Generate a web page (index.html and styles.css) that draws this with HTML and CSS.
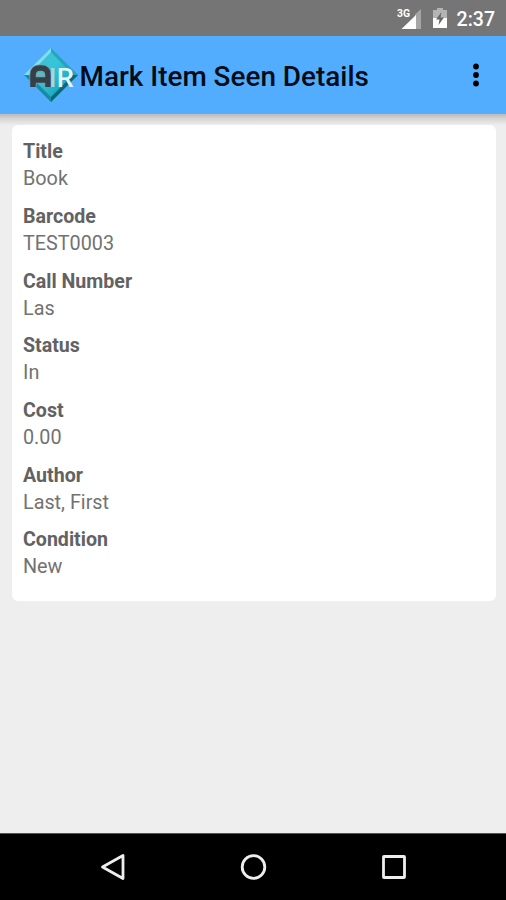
FILE: index.html
```html
<!DOCTYPE html>
<html lang="en">
<head>
<meta charset="utf-8">
<title>Mark Item Seen Details</title>
<link rel="stylesheet" href="styles.css">
</head>
<body>
<div class="screen">
  <div class="status">
    <svg class="signal" width="26" height="24" viewBox="0 0 26 24">
      <path d="M18 7.500 24 2v20h-6z" fill="#a6a6a6"/>
      <path d="M4.500 22 19 8v14z" fill="#fff"/>
      <text class="net" x="0" y="10" textLength="13" lengthAdjust="spacingAndGlyphs">3G</text>
    </svg>
    <svg class="battery" width="16" height="22" viewBox="0 0 16 22">
      <path d="M1 3h4V1h6v2h4v8H1z" fill="#b4b4b4"/>
      <path d="M1 11h14v10H1z" fill="#fff"/>
      <path d="M9.500 5 4 12.500h3.500L6.500 18 12 10.500H8.500z" fill="#666"/>
    </svg>
    <span class="time">2:37</span>
  </div>
  <header class="bar">
    <svg class="logo" width="56" height="58" viewBox="0 0 56 58">
      <defs>
        <linearGradient id="face" x1="0" y1="0" x2="1" y2="1">
          <stop offset="0" stop-color="#49b9d2"/>
          <stop offset=".45" stop-color="#35c5d8"/>
          <stop offset="1" stop-color="#078e9e"/>
        </linearGradient>
      </defs>
      <path d="M28 2 55 29 28 56 1 29z" fill="url(#face)"/>
      <path d="M1 29 28 2l0 4L6 29z" fill="#83dcf0"/>
      <path d="M28 2 55 29h-5L28 6z" fill="#24a4bf"/>
      <path d="M1 29 28 56v-5L6 29z" fill="#168ba5"/>
      <path d="M55 29 28 56v-5l22-22z" fill="#08697c"/>
      <path d="M10 41V29q0-7 7-7h1q7 0 7 7v12M11 34h13" fill="none" stroke="#7f9ba4" stroke-width="7"/>
      <path d="M10 41V29q0-7 7-7h1q7 0 7 7v12M11 34h13" fill="none" stroke="#344047" stroke-width="5.500"/>
      <path d="M15 28.500h5" stroke="#8ea6ad" stroke-width="2"/>
      <text class="mark mark-i" x="26" y="41">I</text>
      <text class="mark" x="33.800" y="41" textLength="17" lengthAdjust="spacingAndGlyphs">R</text>
    </svg>
    <h1 class="title">Mark Item Seen Details</h1>
    <svg class="more" width="8" height="24" viewBox="0 0 8 24">
      <circle cx="4" cy="3.500" r="2.900"/><circle cx="4" cy="12" r="2.900"/><circle cx="4" cy="20.500" r="2.900"/>
    </svg>
  </header>
  <main class="content">
    <dl class="card">
      <div class="field"><dt>Title</dt><dd>Book</dd></div>
      <div class="field"><dt>Barcode</dt><dd>TEST0003</dd></div>
      <div class="field"><dt>Call Number</dt><dd>Las</dd></div>
      <div class="field"><dt>Status</dt><dd>In</dd></div>
      <div class="field"><dt>Cost</dt><dd>0.00</dd></div>
      <div class="field"><dt>Author</dt><dd>Last, First</dd></div>
      <div class="field"><dt>Condition</dt><dd>New</dd></div>
    </dl>
  </main>
  <nav class="nav">
    <svg width="28" height="28" viewBox="0 0 28 28"><path d="M24 2.500v23L3.500 14z"/></svg>
    <svg width="28" height="28" viewBox="0 0 28 28"><circle cx="13.500" cy="14" r="11.300"/></svg>
    <svg width="28" height="28" viewBox="0 0 28 28"><rect x="3.500" y="3.500" width="21" height="21" rx=".5"/></svg>
  </nav>
</div>
</body>
</html>
```
FILE: styles.css
```css
body {
  margin: 0;
  font-family: Roboto, sans-serif;
}

.screen {
  display: flex;
  flex-direction: column;
  width: 506px;
  height: 900px;
  overflow: hidden;
  background: #eee;
}

.status {
  display: flex;
  align-items: center;
  justify-content: flex-end;
  box-sizing: border-box;
  height: 36px;
  padding-right: 11px;
  background: #757575;
}

.signal {
  margin: 1px 9px 0 0;
}

.net {
  font: bold 11px Roboto, sans-serif;
  fill: #fff;
}

.battery {
  margin-right: 9px;
}

.time {
  padding-top: 2px;
  color: #fff;
  font-size: 19.5px;
  font-weight: 500;
}

.bar {
  display: flex;
  align-items: center;
  position: relative;
  box-sizing: border-box;
  height: 78px;
  padding: 0 26px 0 23px;
  background: #53adff;
}

/* Soft edge cast on the page below the bar. */
.bar::after {
  content: "";
  position: absolute;
  top: 100%;
  left: 0;
  right: 0;
  height: 11px;
  background: linear-gradient(#bcb9b7, #d5d3d2 40%, #eee);
}

.mark {
  font: 500 26px Roboto, sans-serif;
  fill: #e7f5f7;
}

.mark-i {
  fill: #9edbe1;
}

.title {
  flex: 1;
  margin: 3px 0 0 0.5px;
  color: #000c18;
  font-size: 27.9px;
  font-weight: 500;
  white-space: nowrap;
}

.content {
  flex: 1;
  padding: 11px 10.5px 0 11.5px;
}

.card {
  box-sizing: border-box;
  height: 476px;
  margin: 0;
  padding: 13.3px 12px 0 11.5px;
  border-radius: 6px;
  background: #fff;
  color: #727272;
  font-size: 19.8px;
  line-height: 27px;
}

.field {
  margin-bottom: 10.7px;
}

dt {
  color: #626262;
  font-size: 19.6px;
  font-weight: 700;
}

dd {
  margin: 0;
}

.nav {
  display: flex;
  align-items: center;
  justify-content: center;
  gap: 112.5px;
  box-sizing: border-box;
  height: 67px;
  padding-left: 1px;
  border-top: 1px solid #555;
  background: #000;
}

.nav svg {
  fill: none;
  stroke: #eee;
  stroke-width: 2.8;
  stroke-linejoin: round;
}
```
